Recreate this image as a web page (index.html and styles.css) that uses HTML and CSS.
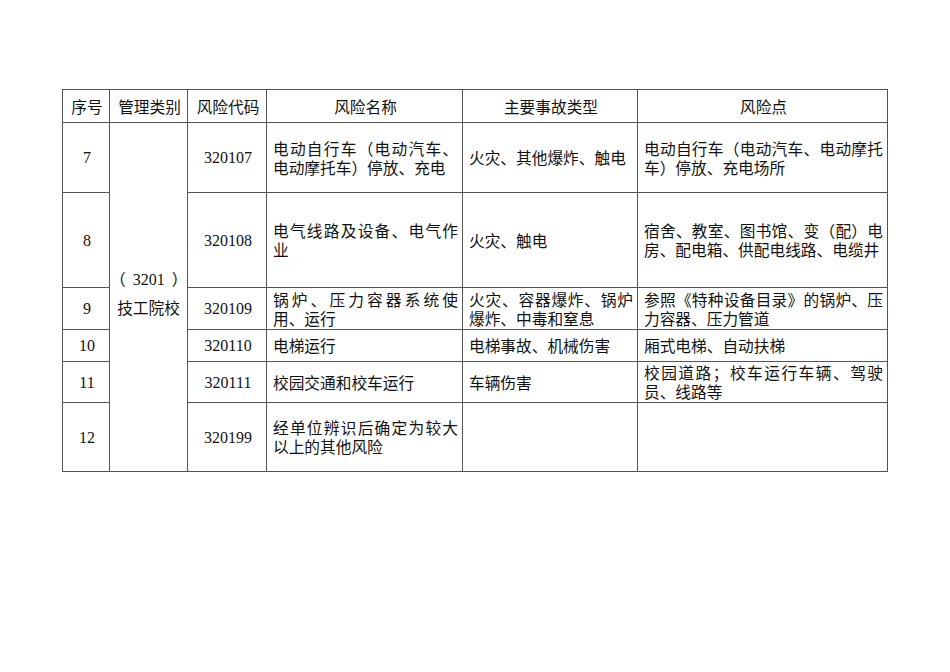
FILE: index.html
```html
<!DOCTYPE html>
<html lang="zh-CN">
<head>
<meta charset="utf-8">
<title>风险清单</title>
<link rel="stylesheet" href="styles.css">
</head>
<body>
<div class="page">
  <table class="risk">
    <colgroup>
      <col class="c-no">
      <col class="c-cat">
      <col class="c-code">
      <col class="c-name">
      <col class="c-type">
      <col class="c-point">
    </colgroup>
    <thead>
      <tr class="r-head">
        <th>序号</th>
        <th>管理类别</th>
        <th>风险代码</th>
        <th>风险名称</th>
        <th>主要事故类型</th>
        <th>风险点</th>
      </tr>
    </thead>
    <tbody>
      <tr class="r7">
        <td class="num">7</td>
        <td class="cat" rowspan="6">
          <div class="cat-code"><span class="paren-open">（</span>3201<span class="paren-close">）</span></div>
          <div class="cat-name">技工院校</div>
        </td>
        <td class="num">320107</td>
        <td class="txt">电动自行车（电动汽车、电动摩托车）停放、充电</td>
        <td class="txt">火灾、其他爆炸、触电</td>
        <td class="txt">电动自行车（电动汽车、电动摩托车）停放、充电场所</td>
      </tr>
      <tr class="r8">
        <td class="num">8</td>
        <td class="num">320108</td>
        <td class="txt">电气线路及设备、电气作业</td>
        <td class="txt">火灾、触电</td>
        <td class="txt">宿舍、教室、图书馆、变（配）电房、配电箱、供配电线路、电缆井</td>
      </tr>
      <tr class="r9">
        <td class="num">9</td>
        <td class="num">320109</td>
        <td class="txt">锅炉、压力容器系统使用、运行</td>
        <td class="txt">火灾、容器爆炸、锅炉爆炸、中毒和窒息</td>
        <td class="txt">参照《特种设备目录》的锅炉、压力容器、压力管道</td>
      </tr>
      <tr class="r10">
        <td class="num">10</td>
        <td class="num">320110</td>
        <td class="txt">电梯运行</td>
        <td class="txt">电梯事故、机械伤害</td>
        <td class="txt">厢式电梯、自动扶梯</td>
      </tr>
      <tr class="r11">
        <td class="num">11</td>
        <td class="num">320111</td>
        <td class="txt">校园交通和校车运行</td>
        <td class="txt">车辆伤害</td>
        <td class="txt">校园道路；校车运行车辆、驾驶员、线路等</td>
      </tr>
      <tr class="r12">
        <td class="num">12</td>
        <td class="num">320199</td>
        <td class="txt">经单位辨识后确定为较大以上的其他风险</td>
        <td class="txt"></td>
        <td class="txt"></td>
      </tr>
    </tbody>
  </table>
</div>
</body>
</html>
```

FILE: styles.css
```css
html, body {
  margin: 0;
  padding: 0;
  background: #ffffff;
}

.page {
  padding: 89px 0 0 62px;
}

.risk {
  border-collapse: collapse;
  table-layout: fixed;
  width: 825px;
  font-family: "Liberation Serif", "Noto Sans CJK SC", serif;
  font-size: 15.7px;
  line-height: 19px;
  color: #111111;
  text-spacing-trim: space-all;
}

.c-no { width: 47px; }
.c-cat { width: 78px; }
.c-code { width: 79px; }
.c-name { width: 196px; }
.c-type { width: 175px; }
.c-point { width: 250px; }

.risk th,
.risk td {
  border: 1px solid #555555;
  padding: 0 4px 0 6px;
  vertical-align: middle;
}

.risk th {
  font-weight: normal;
  text-align: center;
  font-family: "Noto Sans CJK SC", sans-serif;
}

.r-head { height: 33px; }
.r7 { height: 70px; }
.r8 { height: 95px; }
.r9 { height: 42px; }
.r10 { height: 32px; }
.r11 { height: 41px; }
.r12 { height: 69px; }

.num {
  text-align: center;
  font-size: 16px;
}

.txt {
  text-align: justify;
  font-family: "Noto Sans CJK SC", sans-serif;
}

.risk .cat {
  text-align: center;
  padding: 0 0 7px 0;
}

.cat-code {
  line-height: 28px;
  font-size: 16px;
}

.paren-open,
.paren-close {
  font-family: "Noto Sans CJK SC", sans-serif;
  font-size: 15.7px;
}

.paren-open {
  margin-right: 7px;
}

.paren-close {
  margin-left: 7px;
}

.cat-name {
  font-family: "Noto Sans CJK SC", sans-serif;
  line-height: 28px;
}
```
